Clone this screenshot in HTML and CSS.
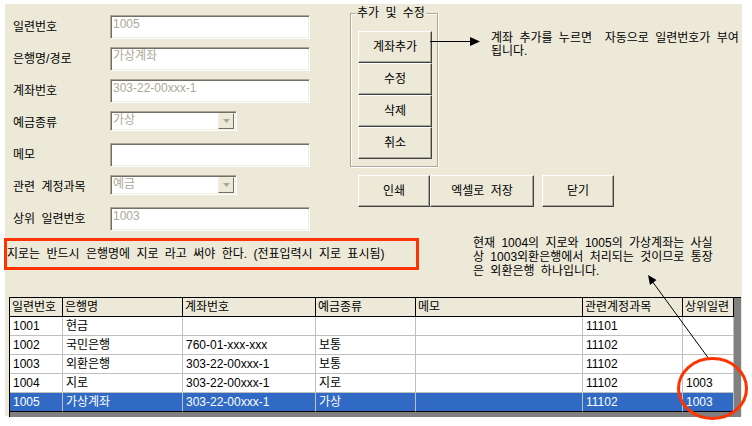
FILE: index.html
```html
<!DOCTYPE html>
<html lang="ko">
<head>
<meta charset="utf-8">
<title>계좌 관리</title>
<link rel="stylesheet" href="styles.css">
</head>
<body>
<div class="panel">
  <div class="top">
    <div class="form">
      <div class="row"><span class="lbl">일련번호</span><div class="tb dis">1005</div></div>
      <div class="row"><span class="lbl">은행명/경로</span><div class="tb dis">가상계좌</div></div>
      <div class="row"><span class="lbl">계좌번호</span><div class="tb dis">303-22-00xxx-1</div></div>
      <div class="row"><span class="lbl">예금종류</span><div class="cb"><span class="cbt">가상</span><span class="cbb"><svg width="7" height="4" viewBox="0 0 7 4"><polygon points="0,0 7,0 3.5,4" fill="#ACA899"/></svg></span></div></div>
      <div class="row"><span class="lbl">메모</span><div class="tb"></div></div>
      <div class="row"><span class="lbl">관련 계정과목</span><div class="cb"><span class="cbt">예금</span><span class="cbb"><svg width="7" height="4" viewBox="0 0 7 4"><polygon points="0,0 7,0 3.5,4" fill="#ACA899"/></svg></span></div></div>
      <div class="row"><span class="lbl">상위 일련번호</span><div class="tb dis">1003</div></div>
    </div>
    <div class="side">
      <fieldset class="grp">
        <legend>추가 및 수정</legend>
        <button class="btn stack">계좌추가</button>
        <button class="btn stack">수정</button>
        <button class="btn stack">삭제</button>
        <button class="btn stack">취소</button>
      </fieldset>
      <div class="btnrow">
        <button class="btn w72">인쇄</button>
        <button class="btn w104">엑셀로 저장</button>
        <button class="btn w72 sep">닫기</button>
      </div>
    </div>
  </div>

  <div class="notice">지로는 반드시 은행명에 지로 라고 써야 한다. (전표입력시 지로 표시됨)</div>

  <div class="grid">
    <div class="gr head">
      <div class="c">일련번호</div><div class="c">은행명</div><div class="c">계좌번호</div><div class="c">예금종류</div><div class="c">메모</div><div class="c">관련계정과목</div><div class="c">상위일련</div>
    </div>
    <div class="gr">
      <div class="c">1001</div><div class="c">현금</div><div class="c"></div><div class="c"></div><div class="c"></div><div class="c">11101</div><div class="c"></div>
    </div>
    <div class="gr">
      <div class="c">1002</div><div class="c">국민은행</div><div class="c">760-01-xxx-xxx</div><div class="c">보통</div><div class="c"></div><div class="c">11102</div><div class="c"></div>
    </div>
    <div class="gr">
      <div class="c">1003</div><div class="c">외환은행</div><div class="c">303-22-00xxx-1</div><div class="c">보통</div><div class="c"></div><div class="c">11102</div><div class="c"></div>
    </div>
    <div class="gr">
      <div class="c">1004</div><div class="c">지로</div><div class="c">303-22-00xxx-1</div><div class="c">지로</div><div class="c"></div><div class="c">11102</div><div class="c">1003</div>
    </div>
    <div class="gr sel">
      <div class="c">1005</div><div class="c">가상계좌</div><div class="c">303-22-00xxx-1</div><div class="c">가상</div><div class="c"></div><div class="c">11102</div><div class="c">1003</div>
    </div>
  </div>

  <div class="note note1">계좌 추가를 누르면  자동으로 일련번호가 부여<br>됩니다.</div>
  <div class="note note2">현재 1004의 지로와 1005의 가상계좌는 사실<br>상 1003외환은행에서 처리되는 것이므로 통장<br>은 외환은행 하나입니다.</div>

  <svg class="overlay" width="752" height="426" viewBox="0 0 752 426">
    <line x1="430" y1="41.5" x2="472" y2="41.5" stroke="#000" stroke-width="1"/>
    <polygon points="470,37 480,41.5 470,46" fill="#000"/>
    <line x1="652" y1="281" x2="709" y2="359" stroke="#000" stroke-width="1"/>
    <polygon points="648,275 656.5,280 650,285" fill="#000"/>
    <ellipse cx="712.5" cy="388.5" rx="34" ry="30" fill="none" stroke="#FF3300" stroke-width="3"/>
  </svg>
</div>
</body>
</html>
```
FILE: styles.css
```css
* { box-sizing: border-box; }
html, body { margin: 0; padding: 0; background: #fff; }
body {
  font-family: "Liberation Sans", "Noto Sans CJK KR", sans-serif;
  font-size: 12px;
  color: #000;
  width: 752px;
  height: 426px;
  overflow: hidden;
  word-spacing: 3px;
}
.panel {
  position: relative;
  margin: 4px 0 0 5px;
  width: 737px;
  height: 412px;
  background: #ECE9D8;
  padding-top: 7px;
}
.top { display: flex; }
.form { padding-left: 8px; }
.row { display: flex; align-items: flex-start; height: 32px; }
.lbl { width: 97px; align-self: center; line-height: 14px; white-space: nowrap; }
.tb {
  margin-top: 4px;
  width: 200px;
  height: 24px;
  background: #fff;
  border: 1px solid;
  border-color: #ACA899 #fff #fff #ACA899;
  box-shadow: inset 1px 1px 0 #716F64, inset -1px -1px 0 #F1EFE2;
  padding: 1px 2px;
  line-height: 14px;
  white-space: nowrap;
}
.dis { color: #ACA899; }
.cb {
  margin-top: 4px;
  width: 127px;
  height: 20px;
  background: #fff;
  border: 1px solid;
  border-color: #ACA899 #fff #fff #ACA899;
  box-shadow: inset 1px 1px 0 #716F64, inset -1px -1px 0 #F1EFE2;
  display: flex;
  padding: 1px 2px;
  color: #ACA899;
}
.cbt { flex: 1; line-height: 14px; }
.cbb {
  margin-top: 0;
  width: 16px;
  height: 16px;
  background: #ECE9D8;
  border: 1px solid;
  border-color: #F1EFE2 #716F64 #716F64 #F1EFE2;
  display: flex;
  align-items: center;
  justify-content: center;
}
.side { margin-left: 40px; }
.grp {
  margin: -5px 0 0 0;
  width: 88px;
  padding: 11px 5px 7px 7px;
  border: 1px solid #ACA899;
  box-shadow: 1px 1px 0 #fff, inset 1px 1px 0 #fff;
  min-width: 0;
}
.grp legend {
  padding: 0 1px;
  margin-left: -2px;
  line-height: 14px;
  background: #ECE9D8;
  white-space: nowrap;
}
.btn {
  font-family: inherit;
  font-size: 12px;
  word-spacing: 3px;
  color: #000;
  background: #ECE9D8;
  border: 1px solid;
  border-color: #fff #404040 #404040 #fff;
  box-shadow: inset -1px -1px 0 #ACA899;
  height: 32px;
  padding: 0;
  line-height: 14px;
  border-radius: 0;
}
.stack { display: block; width: 74px; }
.btnrow { display: flex; margin: 8px 0 0 8px; }
.w72 { width: 72px; }
.w104 { width: 104px; }
.sep { margin-left: 8px; }
.notice {
  margin: 3px 0 0 -1px;
  width: 415px;
  height: 32px;
  border: 3px solid #FF3300;
  line-height: 26px;
  padding: 0;
  white-space: nowrap;
}
.grid {
  margin: 27px 0 0 4px;
  width: 732px;
  height: 120px;
  background: #808080;
  border-top: 1px solid #000;
  border-left: 1px solid #000;
}
.gr {
  display: grid;
  grid-template-columns: 53px 120px 133px 100px 167px 100px 51px;
  width: 724px;
  height: 19px;
}
.c {
  background: #fff;
  border-right: 1px solid #C0C0C0;
  border-bottom: 1px solid #C0C0C0;
  padding-left: 3px;
  line-height: 18px;
  white-space: nowrap;
  overflow: hidden;
}
.head .c {
  background: #ECE9D8;
  border-right-color: #000;
  border-bottom-color: #000;
  padding-left: 2px;
}
.sel .c {
  background: #316AC5;
  color: #fff;
  border-bottom-color: #000;
}
.note {
  position: absolute;
  white-space: pre;
  line-height: 14px;
}
.note1 { left: 486px; top: 28px; line-height: 13px; }
.note2 { left: 468px; top: 232px; line-height: 14px; }
.overlay {
  position: absolute;
  left: -5px;
  top: -4px;
  overflow: visible;
  pointer-events: none;
}
```
